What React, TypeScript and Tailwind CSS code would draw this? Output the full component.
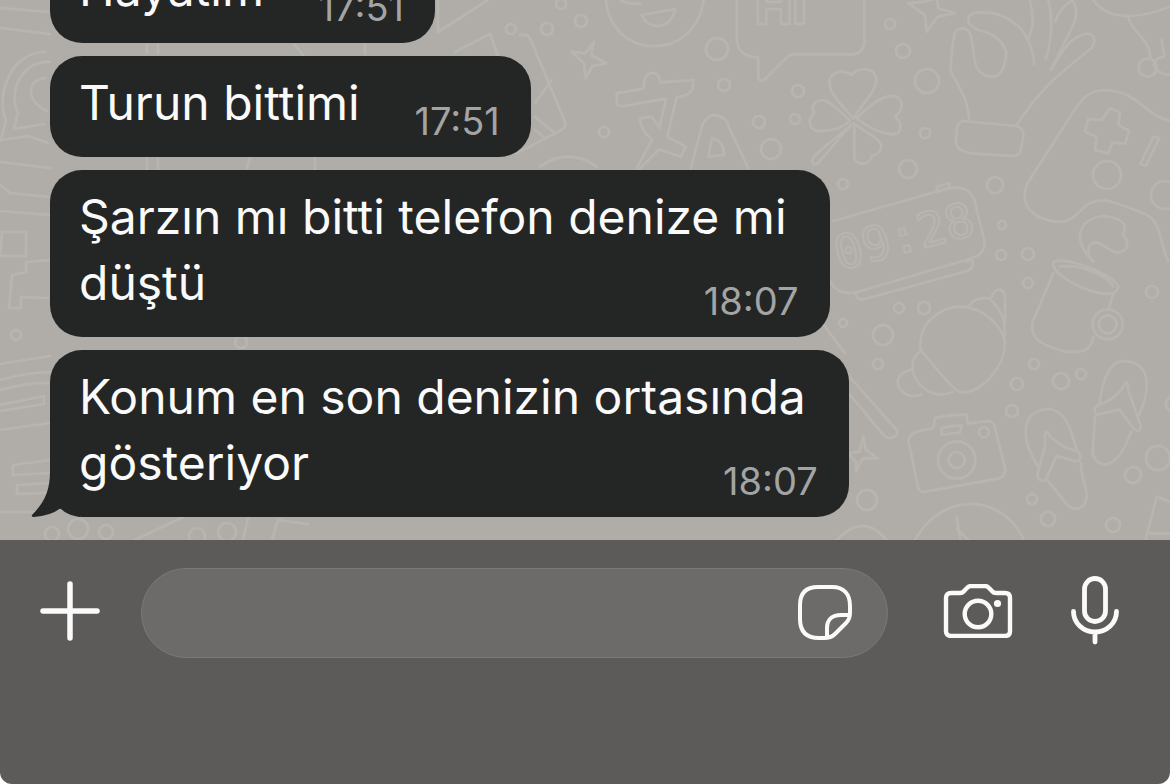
import React from "react";

type Message = { lines: string[]; time: string; tail?: boolean };

const messages: Message[] = [
  { lines: ["Hayatım"], time: "17:51" },
  { lines: ["Turun bittimi"], time: "17:51" },
  { lines: ["Şarzın mı bitti telefon denize mi", "düştü"], time: "18:07" },
  { lines: ["Konum en son denizin ortasında", "gösteriyor"], time: "18:07", tail: true },
];

/* [x, y, radius] of the small rings scattered between the doodles */
const rings: number[][] = [
  [890, 24, 5], [903, 51, 7], [927, 81, 12], [925, 133, 5], [908, 169, 9], [843, 184, 5],
  [995, 185, 8], [1002, 225, 4], [1001, 255, 5], [1028, 254, 6], [1107, 175, 14], [1165, 195, 14],
  [899, 308, 5], [924, 308, 6], [843, 323, 4], [883, 335, 10], [878, 364, 5], [1028, 283, 5],
  [1152, 292, 6], [1034, 364, 5], [1017, 384, 6], [1061, 381, 8], [1081, 374, 5], [1012, 411, 6],
  [1158, 458, 12], [1133, 475, 8], [867, 500, 10], [1032, 499, 5], [1048, 519, 7], [1113, 525, 7],
  [1174, 404, 8], [561, 4, 5], [547, 29, 6], [581, 21, 6], [717, 49, 11], [724, 85, 6], [798, 91, 6],
  [759, 122, 6], [795, 119, 5], [771, 149, 10], [604, 132, 5], [511, 29, 5], [16, 335, 5],
  [241, 342, 6], [78, 529, 10], [52, 534, 7], [106, 532, 7], [197, 536, 8], [227, 532, 9],
];

function Wallpaper() {
  return (
    <svg
      aria-hidden="true"
      viewBox="0 0 1170 540"
      preserveAspectRatio="xMaxYMax slice"
      className="absolute inset-0 h-full w-full"
      fill="none"
      stroke="#b8b5b0"
      strokeWidth="2.7"
      strokeLinecap="round"
      strokeLinejoin="round"
    >
      {rings.map(([x, y, r]) => (
        <circle key={`${x}-${y}`} cx={x} cy={y} r={r} />
      ))}

      {/* hand, clover, game pad, clock */}
      <g transform="translate(830 0) scale(.33333)" strokeWidth="8">
        <path d="M103 0v125q-2 35-35 38H-110q-10 0-20 10l-60 60q-22 20-25-5v-55q-60-2-65-55V0" />
        <path d="M320-5l5 30 50 15-52 10-33 45-5-50-50-35 45-5z" />
        <path d="M417 355c-5-55-20-80-55-140 0-55 5-80 12-115 12-22 38-20 48 5 10 30 5 75 20 100 20 30 60 35 75 5q12-30 12-55c-20-45-45-55-85-65-40-20-38-50 0-53 65-2 100 20 130 50 25 35 38 65 38 105" />
        <path d="M600 0c12 60 10 80-5 115M655 0c15 60 10 120-7 175M675 65c15-40 35-50 50-65 20 20 15 50 5 75l-68 135c40-60 50-90 100-108 30-5 40 15 22 42-80 70-130 90-225 232" />
        <path d="M400 363l158 15q24 5 22 30l-8 42q-4 18-25 18l-120-8q-50-5-50-40l5-40q5-15 18-17z" />
        <path d="M70 355C20 300-10 270 0 235c15-25 45-25 65-10 20-25 70-25 75 15-5 40-40 65-70 115zM80 355c40-40 80-75 120-65 25 15 15 45-5 60 25 20 20 55-10 53-35-3-70-20-105-48zM73 370v105c10 25 50 20 52-8 30-5 35-30 20-45-20-22-50-30-72-52zM60 362C30 335 0 302-20 301c-25-2-38 15-28 40-20 15-16 48 12 52 40 2 80-12 96-31z" />
        <path d="M66 372C30 405-20 440-50 472-60 490-45 500-35 488Z" />
        <path d="M1020 362c-80-15-90-90-200-92-60 5-70 40-90 65L595 545c-20 40-15 80 30 105 90 40 110-5 145-35 50-30 85-5 145 15 90 25 65 80 100 155" />
        <path d="M840 325l30 12-5 38 33 18-13 38-38-3-12 32-40-10 5-40-35-15 10-38 40 3zM970 410l18 4-40 83-17-5z" />
        <path d="M790 0c40 60 130 60 230 20M893 50c20 55 65 65 68 120M995 120l8 50c-60 10-20 60 20 53" />
        <circle cx="953" cy="203" r="27" />
        <path d="M790 785c-70-70-40-130 30-137 60 5 75 30 58 55 20 20 20 50-15 55-40-10-60-50-85-20-8 20 3 40 12 47z" />
        <path d="M10 663l345-98c55-10 80 15 85 65l23 90c5 40-20 50-55 60L75 878c-35 5-60-5-75-35" />
        <path d="M410 785q20-15 18 10-2 15-25 20L105 897q-25 5-27-12" />
        <text x="28" y="812" transform="rotate(-15 28 812)" fontFamily="DejaVu Sans Mono, monospace" fontSize="142" strokeWidth="6">09:28</text>
        <path d="M320 560l38-10v15l-38 10z" />
      </g>

      {/* cup, planet, camera, flip-flops */}
      <g transform="translate(830 270) scale(.33333)" strokeWidth="8">
        <path d="M670 10l-60 140c-20 60 40 80 95 95 55 5 80-5 85-45M670-15c-10-40 180 20 195 65-5 60-190-20-195-65zM690-10c60-10 150 30 160 60M850 70l-15 50" />
        <circle cx="833" cy="163" r="45" />
        <circle cx="833" cy="163" r="27" />
        <path d="M272 240c-10-80 60-130 120-130 90 5 130 80 133 110 0 70-70 150-130 147-30-5-80-80-123-127zM415 110c15-25 40-28 65-25 30 35 50 60 43 120M485 80c15-30 40-30 40 10v65M268 245c-60 50 20 160 100 120M245 298c-80 20-30 100 30 75" />
        <path d="M240 500q10-15 35-18l35-8 5-30q45-10 95-10l3 27 60-8q20 0 23 25l30 120q-3 30-35 30l-210 38q-15 0-18-20l-28-135z" />
        <path d="M335 475q30-10 60-8l-5 20-55 8z" />
        <circle cx="380" cy="570" r="56" />
        <circle cx="380" cy="570" r="24" />
        <circle cx="462" cy="487" r="15" />
        <path d="M625 590c-60-90-50-175 38-173 60 20 60 80 80 128M745 545q15 25-5 30l-60-18-30 65c-5 20-30 10-27-12l22-80v-40q10-10 15 10 40 35 85 45zM652 630l60 75c30 25 60 5 58-35-5-30-18-55-17-90" />
        <path d="M808 405c10-90 35-132 75-132 80 5 80 80 45 160M800 435q-15-20 5-30 60-20 80-65 10-10 8 15l40 115q-5 20-20 8l-45-60zM795 440l-7 110c20 60 80 40 115-65" />
        <path d="M-30 150l75 100M50 310l150 170c10 20-20 30-35 20L60 375M100 500l-12 45-35 5 25 25v30l20-40 45 0-35-25zM255 810c90-160 280-130 330 10M380 740l10 65M380 775l45 45M20 810q80-85 150 0M980 680l-35 135M980 680l40 15M960 790h60" />
      </g>

      {/* smiley, greeting, translation mark */}
      <g transform="translate(520 0) scale(.33333)" strokeWidth="8">
        <path d="M258 0c15 180 265 190 293 0M300 0q30 15 60 10M365 45l100-18c-10 65-80 65-100 18z" />
        <path d="M222 125l-8 40 45 25-42 8-20 37-5-45-38-35 42 5z" />
        <path d="M0 105q20-5 30 10l105 250q5 20-20 30L-10 460M45 310l50-70M45 350l60 50M45 390l30 25" />
        <text x="705" y="72" fontFamily="Inter, sans-serif" fontWeight="800" fontSize="150" strokeWidth="7">HI</text>
        <path d="M290 280l82-15c-8-50 42-65 50-18l98-7c0 30-5 40-30 48l-20 4-28 118 55 30-15 30-65-22-60 60M290 280v28q2 12 20 10l128-22-20 88-22-34-36 5c0 30 20 50 36 65l-46 85" />
        <path d="M512 505l35-130q25-50 70-15l68 145M565 470l10-55q35 5 38 50z" />
        <path d="M60 500q85-60 170 0" />
      </g>

      {/* left edge doodles */}
      <path d="M45 52C8 52-4 100 6 120L1 140 28 136 48 143M50 62C20 60 8 95 18 112l-4 17 30-5M45 78c-18 2-20 22 2 33" />
      <path d="M0 8l48 4M0 28l50 6M0 162l50 6M0 185l10 8 40 4M0 211l50 4M2 232h24v24H0zM26 262l24-2M26 262v10l-14 3-3 33h12v-11l27 1M0 364l50-8M0 380q30-8 50-8M0 390q30-8 50-7M0 405l44-9v8L0 411M0 430l50-7M50 460l-37 5v10l36-2M50 483l-33 2v9l31-1M0 512h40" />
      <path d="M135 540l48-23M243 540l5-22M272 540l6-20 30 4M147 45v8M158 45v8M295 45l8 10M365 45v9M147 158v11M158 158v11M315 157v12M250 158l-3 10" />
      <path d="M438 0v32l50-32M455 52l35-18 8 22" />
    </svg>
  );
}

function Bubble({ message }: { message: Message }) {
  const single = message.lines.length === 1;
  return (
    <li className="relative grid rounded-[32px] bg-[#242626] pt-[14px] pr-[31px] pb-[21px] pl-[29px]">
      {message.tail && (
        <svg
          aria-hidden="true"
          viewBox="0 0 50 80"
          className="absolute bottom-0 -left-5 h-20 w-[50px]"
          fill="#242626"
        >
          <path d="M20 0V35C20 54 14 66 2 78Q1 80 4 80 20 79 31 71 38 77 50 80V0Z" />
        </svg>
      )}
      <p
        className={
          single
            ? "relative col-start-1 row-start-1 pr-[140px] text-[48px] leading-[66px] whitespace-nowrap text-[#fafafa]"
            : "relative col-start-1 row-start-1 pr-3 text-[48px] leading-[66px] whitespace-nowrap text-[#fafafa]"
        }
      >
        {message.lines.map((line) => (
          <span key={line} className="block">
            {line}
          </span>
        ))}
      </p>
      <time className="relative col-start-1 row-start-1 self-end justify-self-end text-[38px] leading-[30px] text-[#a3a4a4]">
        {message.time}
      </time>
    </li>
  );
}

export default function App() {
  return (
    <main className="flex h-screen flex-col overflow-hidden bg-white font-['Inter',sans-serif]">
      <section
        aria-label="Messages"
        className="relative flex min-h-0 flex-1 flex-col justify-end overflow-hidden bg-[#b0ada8] pb-[23px] pl-[50px]"
      >
        <Wallpaper />
        <ol className="relative flex flex-col items-start gap-[13px]">
          {messages.map((message) => (
            <Bubble key={message.lines[0]} message={message} />
          ))}
        </ol>
      </section>

      <form
        className="flex items-start rounded-b-xl bg-[#5c5b59] px-10 pt-7 pb-[126px]"
        onSubmit={(event) => event.preventDefault()}
      >
        <button type="button" aria-label="Add attachment" className="mt-3 shrink-0">
          <svg viewBox="0 0 60 60" className="h-[60px] w-[60px] overflow-visible" stroke="#fafafa" strokeWidth="5.5" strokeLinecap="round">
            <path d="M30 4v54M3 31h54" />
          </svg>
        </button>

        <div className="ml-[41px] flex h-[90px] min-w-0 flex-1 items-center rounded-full border border-[#7a7977] bg-[#6c6b6a] pr-[33px] pl-10">
          <input
            type="text"
            aria-label="Message"
            className="h-full min-w-0 flex-1 bg-transparent text-[40px] text-white outline-none"
          />
          <button type="button" aria-label="Stickers" className="shrink-0">
            <svg viewBox="1 1 56 56" className="h-14 w-14 overflow-visible" fill="none" stroke="#fafafa" strokeWidth="4" strokeLinecap="round" strokeLinejoin="round">
              <path d="M21 3H35C47 3 53 10 53 22V29C53 34 52 36 49 39L38 50C35 53 32 54 27 54H22C9 54 3 47 3 35V21C3 9 9 3 21 3Z" />
              <path d="M52 31H44C35 31 30 36 30 44V53" />
            </svg>
          </button>
        </div>

        <button type="button" aria-label="Camera" className="mt-4 ml-[55px] shrink-0">
          <svg viewBox="0 0 70 54" className="h-[54px] w-[70px]" fill="none" stroke="#fafafa" strokeWidth="4.4" strokeLinejoin="round">
            <path d="M8 9H17C20 9 20 8 22 6L24 4Q26 2 28 2H42Q44 2 46 4L48 6C50 8 50 9 53 9H62Q67 9 67 14V47Q67 52 62 52H8Q3 52 3 47V14Q3 9 8 9Z" />
            <circle cx="35" cy="30" r="13.3" />
            <circle cx="54.5" cy="19.5" r="3.6" fill="#fafafa" stroke="none" />
          </svg>
        </button>

        <button type="button" aria-label="Record voice message" className="mt-2 mr-[11px] ml-[58px] shrink-0">
          <svg viewBox="0 0 48 70" className="h-[70px] w-12" fill="none" stroke="#fafafa" strokeWidth="4.8" strokeLinecap="round">
            <rect x="13.5" y="2.5" width="21" height="43" rx="10.5" />
            <path d="M2.500 35.500C2.500 47 12 56 24 56S45.500 47 45.500 35.500M24 56V66" />
          </svg>
        </button>
      </form>
    </main>
  );
}
